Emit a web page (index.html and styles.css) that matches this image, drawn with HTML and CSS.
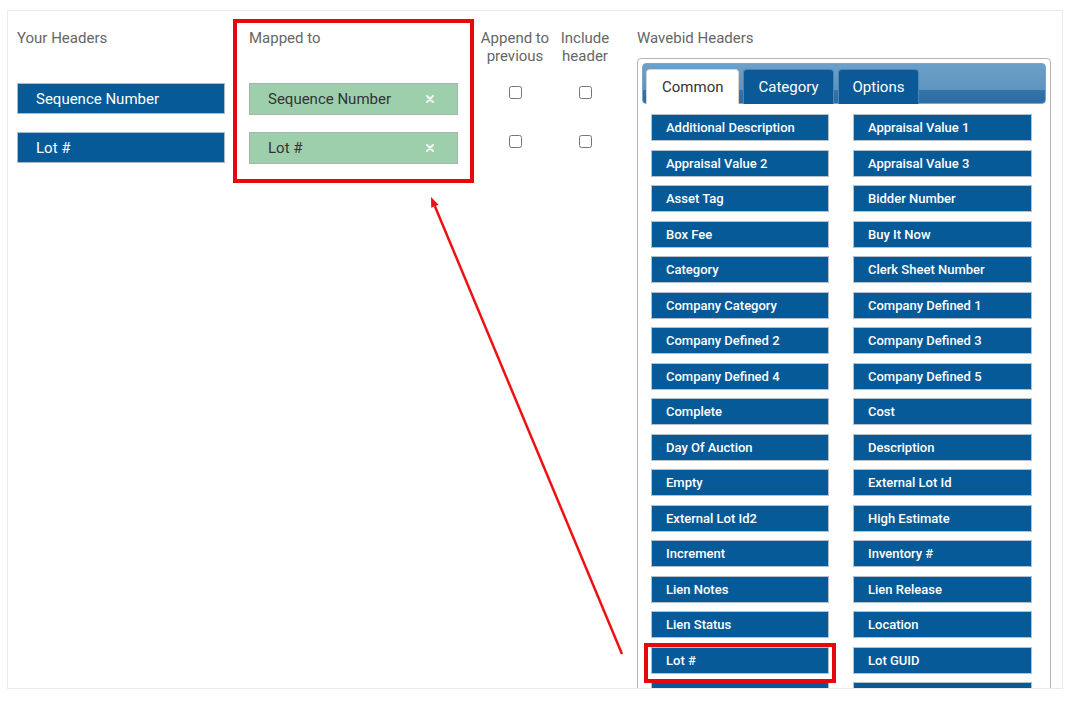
FILE: index.html
```html
<!DOCTYPE html>
<html lang="en">
<head>
  <meta charset="UTF-8">
  <title>Column Mapping</title>
  <link rel="stylesheet" href="styles.css">
</head>
<body>
  <div class="panel">
    <div class="mapping">

      <div class="col col-yours">
        <div class="heading">Your Headers</div>
        <div class="source">Sequence Number</div>
        <div class="source">Lot #</div>
      </div>

      <div class="col col-mapped">
        <div class="heading">Mapped to</div>
        <div class="target">
          <span>Sequence Number</span>
          <svg class="remove" width="8" height="8" viewBox="0 0 8 8"><path d="M1 1L7 7M7 1L1 7"/></svg>
        </div>
        <div class="target">
          <span>Lot #</span>
          <svg class="remove" width="8" height="8" viewBox="0 0 8 8"><path d="M1 1L7 7M7 1L1 7"/></svg>
        </div>
      </div>

      <div class="col col-check col-append">
        <div class="heading">Append to<br>previous</div>
        <div class="check-row"><input type="checkbox"></div>
        <div class="check-row"><input type="checkbox"></div>
      </div>

      <div class="col col-check col-include">
        <div class="heading">Include<br>header</div>
        <div class="check-row"><input type="checkbox"></div>
        <div class="check-row"><input type="checkbox"></div>
      </div>

      <div class="col col-wavebid">
        <div class="heading heading-short">Wavebid Headers</div>
        <div class="tabs">
          <div class="tab-bar">
            <div class="tab active">Common</div>
            <div class="tab">Category</div>
            <div class="tab">Options</div>
          </div>
          <div class="field-grid" id="fieldGrid"></div>
        </div>
      </div>

    </div>
  </div>

  <!-- callout: box round the mapped column, box round the picked field, arrow between -->
  <svg class="callout" width="1071" height="704" viewBox="0 0 1071 704">
    <rect x="235" y="21" width="237" height="160"/>
    <rect x="646" y="645" width="188" height="36"/>
    <line x1="622" y1="654" x2="434.9" y2="206.2"/>
    <polygon points="431,197 438.6,204.7 431.2,207.8"/>
  </svg>

  <script>
    const FIELDS = [
      'Additional Description', 'Appraisal Value 1',
      'Appraisal Value 2', 'Appraisal Value 3',
      'Asset Tag', 'Bidder Number',
      'Box Fee', 'Buy It Now',
      'Category', 'Clerk Sheet Number',
      'Company Category', 'Company Defined 1',
      'Company Defined 2', 'Company Defined 3',
      'Company Defined 4', 'Company Defined 5',
      'Complete', 'Cost',
      'Day Of Auction', 'Description',
      'Empty', 'External Lot Id',
      'External Lot Id2', 'High Estimate',
      'Increment', 'Inventory #',
      'Lien Notes', 'Lien Release',
      'Lien Status', 'Location',
      'Lot #', 'Lot GUID'
    ];

    const grid = document.getElementById('fieldGrid');
    FIELDS.forEach(name => {
      const el = document.createElement('div');
      el.className = 'field';
      el.textContent = name;
      grid.appendChild(el);
    });

    // the list runs on below the fold; only the top edge of the next row shows
    for (let i = 0; i < 2; i++) {
      const el = document.createElement('div');
      el.className = 'field';
      grid.appendChild(el);
    }
  </script>
</body>
</html>
```

FILE: styles.css
```css
body {
  margin: 0;
  background: #fff;
  font-family: Roboto, 'Liberation Sans', sans-serif;
  position: relative;
}

.panel {
  box-sizing: border-box;
  width: 1056px;
  height: 679px;
  margin: 10px 0 0 7px;
  border: 1px solid #ebebeb;
  overflow: hidden;
}

.mapping {
  display: flex;
  align-items: flex-start;
  padding: 18px 0 0 9px;
}

.heading {
  height: 54px;
  font-size: 15px;
  line-height: 18px;
  color: #666;
}

.heading-short {
  height: 29px;
}

.col-yours {
  width: 208px;
}

.col-mapped {
  width: 209px;
  margin-left: 24px;
}

.col-append {
  width: 82px;
  margin-left: 16px;
}

.col-include {
  width: 58px;
}

.col-wavebid {
  width: 414px;
  margin-left: 23px;
}

.col-check {
  text-align: center;
}

.source,
.target {
  box-sizing: border-box;
  height: 31px;
  margin-bottom: 18px;
  padding-left: 18px;
  display: flex;
  align-items: center;
  font-size: 15px;
}

.source {
  background: #055a97;
  border: 1px solid #a9bccb;
  color: #fff;
}

.target {
  height: 32px;
  margin-bottom: 17px;
  background: #9dcfad;
  border: 1px solid #a7b3ab;
  color: #333;
  justify-content: space-between;
  padding-right: 23px;
}

.remove path {
  stroke: #eef6f0;
  stroke-width: 2.2;
  stroke-linecap: round;
}

.check-row {
  height: 31px;
  margin-bottom: 18px;
}

.check-row input {
  width: 13px;
  height: 13px;
  margin: 3px 0 0;
}

/* tab widget */
.tabs {
  box-sizing: border-box;
  height: 640px;
  border: 1px solid #b4b4b4;
  border-radius: 4px;
  padding: 4px;
}

.tab-bar {
  height: 41px;
  box-sizing: border-box;
  padding: 5px 0 0 3px;
  display: flex;
  gap: 4px;
  border-radius: 4px;
  background: linear-gradient(#6ca0c8 0%, #5e94bf 66%, #3574aa 66%, #2c6ca4 100%);
  border: 1px solid #7aa6c8;
}

.tab {
  height: 35px;
  box-sizing: border-box;
  padding: 0 14px;
  display: flex;
  align-items: center;
  font-size: 15px;
  color: #fff;
  background: #0b5a97;
  border: 1px solid #4d86b6;
  border-bottom: none;
  border-radius: 4px 4px 0 0;
}

.tab.active {
  background: #fff;
  color: #333;
  border-color: #d6d6d6;
  padding: 0 15px;
}

.field-grid {
  display: grid;
  grid-template-columns: 178px 179px;
  column-gap: 24px;
  row-gap: 8.5px;
  padding: 10px 0 0 9px;
}

.field {
  box-sizing: border-box;
  height: 27px;
  padding-left: 14px;
  display: flex;
  align-items: center;
  background: #065a98;
  border: 1px solid #b3c1ce;
  color: #fff;
  font-size: 13px;
  font-weight: 500;
}

/* red callout drawn over the page */
.callout {
  position: absolute;
  top: 0;
  left: 0;
  pointer-events: none;
}

.callout rect {
  fill: none;
  stroke: #e5080c;
  stroke-width: 4;
}

.callout line {
  stroke: #ee1111;
  stroke-width: 2.5;
}

.callout polygon {
  fill: #ee1111;
}
```
